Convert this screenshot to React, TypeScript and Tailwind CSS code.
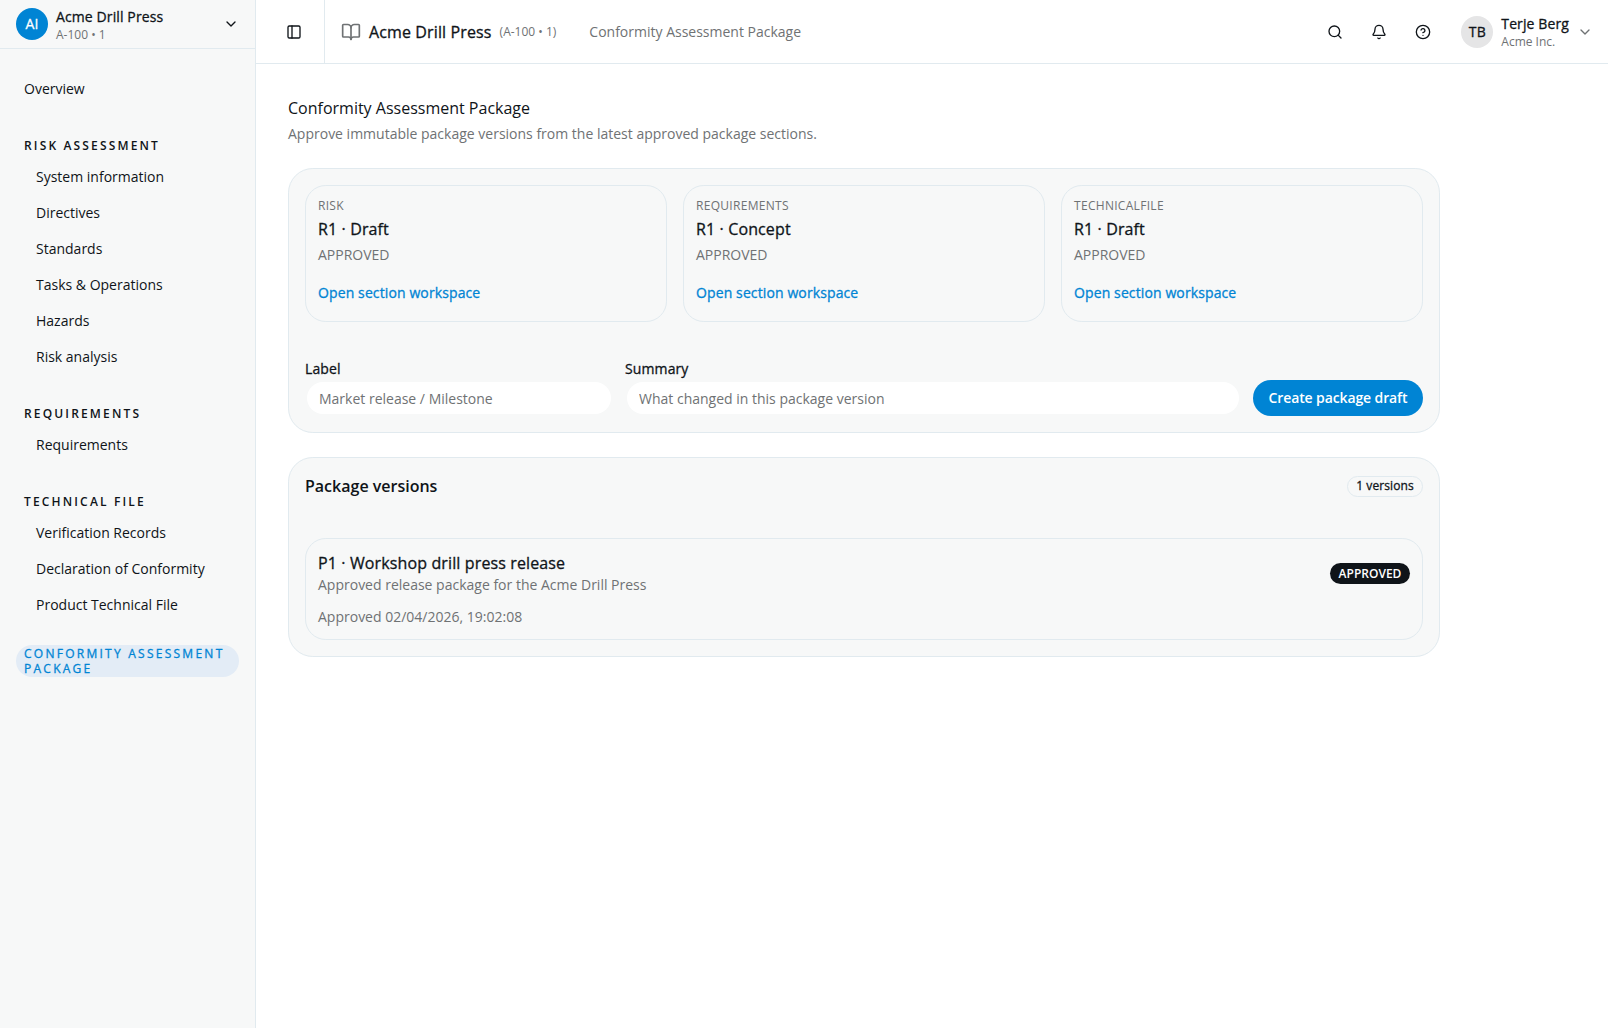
import React from "react";
import { Bell, BookOpen, ChevronDown, CircleHelp, PanelLeft, Search } from "lucide-react";

const navGroups = [
  {
    title: "Risk assessment",
    items: ["System information", "Directives", "Standards", "Tasks & Operations", "Hazards", "Risk analysis"],
  },
  { title: "Requirements", items: ["Requirements"] },
  {
    title: "Technical file",
    items: ["Verification Records", "Declaration of Conformity", "Product Technical File"],
  },
];

const sections = [
  { name: "RISK", revision: "R1 · Draft", status: "APPROVED" },
  { name: "REQUIREMENTS", revision: "R1 · Concept", status: "APPROVED" },
  { name: "TECHNICALFILE", revision: "R1 · Draft", status: "APPROVED" },
];

// Open Sans ships without a 500 weight, so thicken the regular face slightly
const medium = "font-normal tracking-[0.008em] [-webkit-text-stroke:0.3px_currentColor]";

function Sidebar() {
  return (
    <aside className="flex w-64 shrink-0 flex-col border-r border-[#e1eaef] bg-[#f7f8f8]">
      <button className="flex h-[49px] items-center gap-2 border-b border-[#e1eaef] px-4 text-left">
        <span className={`flex size-8 items-center justify-center rounded-full bg-[#0084d4] text-sm text-white ${medium}`}>
          AI
        </span>
        <span className="flex flex-1 flex-col pt-[3px]">
          <span className={`text-sm leading-[18px] ${medium}`}>Acme Drill Press</span>
          <span className="mt-px text-xs text-[#6f7274]">A-100 • 1</span>
        </span>
        <ChevronDown className="size-4" />
      </button>

      <nav className="flex flex-col px-4 pt-6 text-sm">
        <a href="#" className="flex h-8 items-center px-2">
          Overview
        </a>
        {navGroups.map((group) => (
          <div key={group.title} className="mt-6">
            <div className="flex h-8 items-center px-2 pt-0.5 text-xs font-semibold tracking-[0.18em] uppercase">
              {group.title}
            </div>
            <ul className="flex flex-col gap-1 pl-3">
              {group.items.map((item) => (
                <li key={item}>
                  <a href="#" className="flex h-8 items-center px-2">
                    {item}
                  </a>
                </li>
              ))}
            </ul>
          </div>
        ))}
        <a
          href="#"
          className="mt-6 flex h-8 items-center rounded-2xl bg-[#e3ecf6] px-2 text-xs leading-tight tracking-[0.188em] text-[#0084d4] uppercase [-webkit-text-stroke:0.3px_currentColor]"
        >
          Conformity Assessment Package
        </a>
      </nav>
    </aside>
  );
}

function TopBar() {
  return (
    <header className="flex h-16 shrink-0 items-center border-b border-[#e1eaef] bg-white">
      <div className="flex h-full w-[69px] items-center justify-end border-r border-[#e1eaef] pr-[22px]">
        <PanelLeft className="size-4" />
      </div>
      <div className="flex items-center gap-2 pl-4">
        <BookOpen className="size-5 text-[#6f7274]" />
        <span className={`text-base ${medium}`}>Acme Drill Press</span>
        <span className="text-xs text-[#6f7274]">(A-100 • 1)</span>
      </div>
      <span className="ml-[33px] text-sm text-[#6f7274]">Conformity Assessment Package</span>

      <div className="ml-auto flex items-center pr-[15px]">
        <div className="flex gap-7 pr-[30px]">
          <Search className="size-4" />
          <Bell className="size-4" />
          <CircleHelp className="size-4" />
        </div>
        <span className={`flex size-8 items-center justify-center rounded-full bg-[#e5e5e6] text-sm ${medium}`}>TB</span>
        <div className="ml-2 flex flex-col pt-0.5">
          <span className={`text-sm leading-[18px] ${medium}`}>Terje Berg</span>
          <span className="mt-px text-xs text-[#6f7274]">Acme Inc.</span>
        </div>
        <ChevronDown className="ml-2 size-4 text-[#6f7274]" />
      </div>
    </header>
  );
}

export default function App() {
  return (
    <div className="flex h-screen bg-white font-['Open_Sans',sans-serif] text-[#0f1419]">
      <Sidebar />
      <div className="flex min-w-0 flex-1 flex-col">
        <TopBar />
        <main className="w-[1216px] px-8 pt-8">
          <h1 className="text-base">Conformity Assessment Package</h1>
          <p className="mt-1 text-sm text-[#6f7274]">
            Approve immutable package versions from the latest approved package sections.
          </p>

          <section className="mt-6 rounded-[24.8px] border border-[#e1eaef] bg-[#f7f8f8] p-4">
            <div className="grid grid-cols-3 gap-4">
              {sections.map((section) => (
                <div key={section.name} className="h-[137px] rounded-[20.8px] border border-[#e1eaef] p-3">
                  <div className="text-xs tracking-wide text-[#6f7274]">{section.name}</div>
                  <div className={`mt-[3px] text-base ${medium}`}>{section.revision}</div>
                  <div className="mt-1 text-sm text-[#6f7274]">{section.status}</div>
                  <a href="#" className={`mt-[18px] block text-sm text-[#0084d4] ${medium}`}>
                    Open section workspace
                  </a>
                </div>
              ))}
            </div>

            <div className="mt-[37px] grid grid-cols-[1fr_2fr_170px] items-end gap-3">
              <label className="text-sm">
                <span className={`block ${medium}`}>Label</span>
                <input
                  placeholder="Market release / Milestone"
                  className="mt-px block h-9 w-full rounded-[18px] border-2 border-transparent bg-white bg-clip-padding px-3 placeholder:text-[#6f7274]"
                />
              </label>
              <label className="text-sm">
                <span className={`block ${medium}`}>Summary</span>
                <input
                  placeholder="What changed in this package version"
                  className="mt-px block h-9 w-full rounded-[18px] border-2 border-transparent bg-white bg-clip-padding px-3 placeholder:text-[#6f7274]"
                />
              </label>
              <button className="h-9 rounded-[18px] bg-[#0084d4] text-sm font-semibold tracking-[-0.008em] text-white">
                Create package draft
              </button>
            </div>
          </section>

          <section className="mt-6 rounded-[24.8px] border border-[#e1eaef] bg-[#f7f8f8] p-4">
            <div className="flex h-6 items-center justify-between">
              <h2 className="text-base font-semibold">Package versions</h2>
              <span
                className={`flex h-[21px] w-[76px] items-center justify-center rounded-full border border-[#e1eaef] text-xs ${medium}`}
              >
                1 versions
              </span>
            </div>
            <div className="mt-10 flex h-[102px] items-start justify-between rounded-[20.8px] border border-[#e1eaef] p-3">
              <div>
                <h3 className={`text-base ${medium}`}>P1 · Workshop drill press release</h3>
                <p className="text-sm text-[#6f7274]">Approved release package for the Acme Drill Press</p>
                <p className="mt-3 text-sm text-[#6f7274]">Approved 02/04/2026, 19:02:08</p>
              </div>
              <span className="mt-3 flex h-[21px] w-20 items-center justify-center rounded-full bg-[#0f1419] text-xs font-semibold text-white">
                APPROVED
              </span>
            </div>
          </section>
        </main>
      </div>
    </div>
  );
}
